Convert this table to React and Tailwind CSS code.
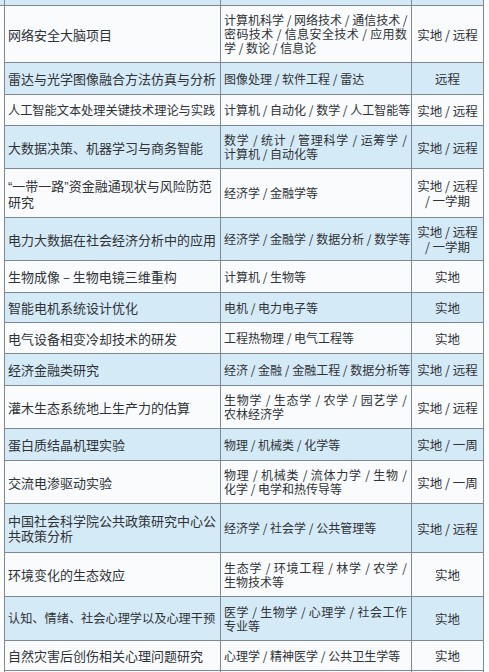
import React from "react";

const BLUE = "bg-[#d5eaf7]";
const WHITE = "bg-[#f9fbfd]";
const LINE = "border-[#7d8891]";

const Q = ({ children }) => (
  <span style={{ fontFamily: '"Liberation Sans", sans-serif' }}>{children}</span>
);

const rows = [
  { h: "h-[57px]", a: ["网络安全大脑项目"], b: ["计算机科学 / 网络技术 / 通信技术 /", "密码技术 / 信息安全技术 / 应用数", "学 / 数论 / 信息论"], c: ["实地 / 远程"] },
  { h: "h-[32px]", a: ["雷达与光学图像融合方法仿真与分析"], b: ["图像处理 / 软件工程 / 雷达"], c: ["远程"] },
  { h: "h-[31px]", a: ["人工智能文本处理关键技术理论与实践"], b: ["计算机 / 自动化 / 数学 / 人工智能等"], c: ["实地 / 远程"], tight: true },
  { h: "h-[43px]", a: ["大数据决策、机器学习与商务智能"], b: ["数学 / 统计 / 管理科学 / 运筹学 /", "计算机 / 自动化等"], c: ["实地 / 远程"] },
  {
    h: "h-[49px]",
    a: [
      <>
        <Q>“</Q>一带一路<Q>”</Q>资金融通现状与风险防范
      </>,
      "研究",
    ],
    b: ["经济学 / 金融学等"],
    c: ["实地 / 远程", "/ 一学期"],
  },
  { h: "h-[43px]", a: ["电力大数据在社会经济分析中的应用"], b: ["经济学 / 金融学 / 数据分析 / 数学等"], c: ["实地 / 远程", "/ 一学期"] },
  { h: "h-[32px]", a: ["生物成像 – 生物电镜三维重构"], b: ["计算机 / 生物等"], c: ["实地"] },
  { h: "h-[30px]", a: ["智能电机系统设计优化"], b: ["电机 / 电力电子等"], c: ["实地"] },
  { h: "h-[31px]", a: ["电气设备相变冷却技术的研发"], b: ["工程热物理 / 电气工程等"], c: ["实地"] },
  { h: "h-[32px]", a: ["经济金融类研究"], b: ["经济 / 金融 / 金融工程 / 数据分析等"], c: ["实地 / 远程"] },
  { h: "h-[43px]", a: ["灌木生态系统地上生产力的估算"], b: ["生物学 / 生态学 / 农学 / 园艺学 /", "农林经济学"], c: ["实地 / 远程"] },
  { h: "h-[32px]", a: ["蛋白质结晶机理实验"], b: ["物理 / 机械类 / 化学等"], c: ["实地 / 一周"] },
  { h: "h-[43px]", a: ["交流电渗驱动实验"], b: ["物理 / 机械类 / 流体力学 / 生物 /", "化学 / 电学和热传导等"], c: ["实地 / 一周"] },
  { h: "h-[49px]", a: ["中国社会科学院公共政策研究中心公", "共政策分析"], b: ["经济学 / 社会学 / 公共管理等"], c: ["实地 / 远程"] },
  { h: "h-[44px]", a: ["环境变化的生态效应"], b: ["生态学 / 环境工程 / 林学 / 农学 /", "生物技术等"], c: ["实地"] },
  { h: "h-[44px]", a: ["认知、情绪、社会心理学以及心理干预"], b: ["医学 / 生物学 / 心理学 / 社会工作", "专业等"], c: ["实地"], tight: true },
  { h: "h-[30px]", a: ["自然灾害后创伤相关心理问题研究"], b: ["心理学 / 精神医学 / 公共卫生学等"], c: ["实地"] },
];

function Lines({ lines, justify, center }) {
  return (
    <div className={center ? "text-center" : ""}>
      {lines.map((l, i) => (
        <div
          key={i}
          className={
            justify && i < lines.length - 1
              ? "text-justify [text-align-last:justify] whitespace-nowrap"
              : "whitespace-nowrap"
          }
        >
          {l}
        </div>
      ))}
    </div>
  );
}

export default function App() {
  return (
    <div
      className="w-[489px] h-[672px] overflow-hidden bg-white text-[#2f3336]"
      style={{ fontFamily: '"Noto Sans CJK SC", "Noto Sans", sans-serif' }}
    >
      <div className={`h-[6px] flex border-b ${LINE} w-[484px] ${BLUE}`}>
        <div className="w-[4px]" />
        <div className={`w-[217px] border-l border-r ${LINE}`} />
        <div className={`w-[191px] border-r ${LINE}`} />
        <div className={`w-[72px] border-r ${LINE}`} />
      </div>
      <div className="pl-[4px]">
        {rows.map((r, i) => (
          <div
            key={i}
            className={`flex ${r.h} border-b ${LINE} ${i % 2 === 0 ? WHITE : BLUE} w-[480px]`}
          >
            <div
              className={`w-[217px] shrink-0 border-l border-r ${LINE} flex items-center pl-[3px] pr-[2px] leading-[15px] ${r.tight ? "text-[12.2px]" : "text-[13px]"}`}
            >
              <Lines lines={r.a} />
            </div>
            <div className={`w-[191px] shrink-0 border-r ${LINE} flex items-center pl-[3px] pr-[4px] text-[12px] leading-[14px]`}>
              <div className="w-full">
                <Lines lines={r.b} justify />
              </div>
            </div>
            <div className={`w-[72px] shrink-0 border-r ${LINE} flex items-center justify-center text-[12.5px] leading-[15px]`}>
              <Lines lines={r.c} center />
            </div>
          </div>
        ))}
        <div className={`flex h-[10px] ${WHITE} w-[480px]`}>
          <div className={`w-[217px] shrink-0 border-l border-r ${LINE}`} />
          <div className={`w-[191px] shrink-0 border-r ${LINE}`} />
          <div className={`w-[72px] shrink-0 border-r ${LINE}`} />
        </div>
      </div>
    </div>
  );
}
